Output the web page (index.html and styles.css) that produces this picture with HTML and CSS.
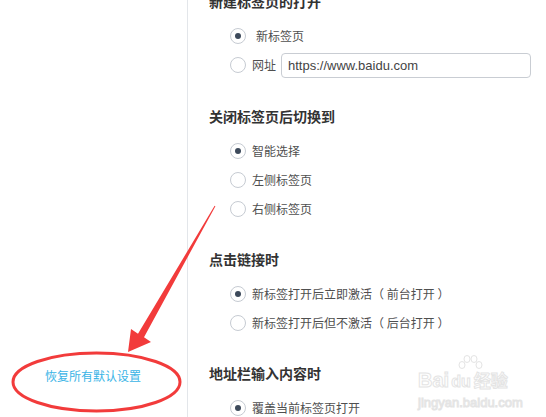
FILE: index.html
```html
<!DOCTYPE html>
<html lang="zh-CN">
<head>
    <meta charset="UTF-8">
    <meta name="viewport" content="width=device-width, initial-scale=1.0">
    <title>设置 - 标签页</title>
    <link rel="stylesheet" href="styles.css">
</head>
<body>

    <div class="page">
        <!-- Sidebar -->
        <aside class="sidebar">
            <a class="reset-link" href="#">恢复所有默认设置</a>
        </aside>

        <!-- Settings -->
        <main class="settings">
            <section class="group">
                <h3 class="group-title">新建标签页的打开</h3>
                <div class="options">
                    <label class="option"><span class="radio checked"></span><span class="label first">新标签页</span></label>
                    <label class="option option-url"><span class="radio"></span><span class="label">网址</span><input class="url-input" type="text" value="https://www.baidu.com"></label>
                </div>
            </section>

            <section class="group">
                <h3 class="group-title">关闭标签页后切换到</h3>
                <div class="options">
                    <label class="option"><span class="radio checked"></span><span class="label">智能选择</span></label>
                    <label class="option"><span class="radio"></span><span class="label">左侧标签页</span></label>
                    <label class="option"><span class="radio"></span><span class="label">右侧标签页</span></label>
                </div>
            </section>

            <section class="group">
                <h3 class="group-title">点击链接时</h3>
                <div class="options">
                    <label class="option"><span class="radio checked"></span><span class="label">新标签打开后立即激活（ 前台打开 ）</span></label>
                    <label class="option"><span class="radio"></span><span class="label">新标签打开后但不激活（ 后台打开 ）</span></label>
                </div>
            </section>

            <section class="group">
                <h3 class="group-title">地址栏输入内容时</h3>
                <div class="options">
                    <label class="option"><span class="radio checked"></span><span class="label">覆盖当前标签页打开</span></label>
                </div>
            </section>
        </main>
    </div>

    <!-- Annotation drawn over the screenshot -->
    <svg class="annotation" width="546" height="417" viewBox="0 0 546 417">
        <ellipse cx="96.5" cy="382" rx="83.5" ry="29" fill="none" stroke="#f23b3b" stroke-width="3"/>
        <polygon fill="#f23b3b" points="214.6,205.8 138,333.8 131,329 128,352 151,342 144,337.2 215.4,206.2"/>
    </svg>

    <!-- Watermark -->
    <div class="watermark">
        <svg class="wm-paw" width="30" height="16" viewBox="0 0 30 16">
            <g fill="#ffffff" stroke="#e4e4e4" stroke-width="1">
                <ellipse cx="6" cy="11" rx="3" ry="3.5"/>
                <ellipse cx="11" cy="5" rx="3" ry="3.5"/>
                <ellipse cx="18" cy="5" rx="3" ry="3.5"/>
                <ellipse cx="23" cy="11" rx="3" ry="3.5"/>
            </g>
        </svg>
        <div class="wm-logo">Bai<span class="wm-du">du</span><span class="wm-cn">经验</span></div>
        <div class="wm-url">jingyan.baidu.com</div>
    </div>

</body>
</html>
```

FILE: styles.css
```css
body {
    margin: 0;
    padding: 0;
    background-color: #ffffff;
    font-family: "Noto Sans CJK SC", "Liberation Sans", sans-serif;
    overflow: hidden;
}

.page {
    display: flex;
    height: 417px;
    overflow: hidden;
}

.sidebar {
    width: 188px;
    flex-shrink: 0;
    border-right: 1px solid #e3e6ea;
    display: flex;
    flex-direction: column;
    justify-content: flex-end;
    padding-bottom: 31px;
    box-sizing: border-box;
}

.reset-link {
    padding-left: 45px;
    font-size: 12px;
    line-height: 20px;
    color: #3ab4e6;
    text-decoration: none;
}

.settings {
    flex: 1;
    padding-left: 21px;
    margin-top: -9px;
}

.group {
    margin-bottom: 26px;
}

.group-title {
    margin: 0 0 10px 0;
    font-size: 14px;
    line-height: 20px;
    font-weight: bold;
    color: #333333;
}

.options {
    padding-left: 21px;
}

.option {
    display: flex;
    align-items: center;
    height: 29px;
}

.option-url {
    height: 30px;
}

.radio {
    width: 14px;
    height: 14px;
    border: 1px solid #c6cbd2;
    border-radius: 50%;
    flex-shrink: 0;
    display: flex;
    align-items: center;
    justify-content: center;
}

.radio.checked::after {
    content: "";
    width: 6px;
    height: 6px;
    border-radius: 50%;
    background-color: #3d4a5b;
}

.label {
    margin-left: 6px;
    font-size: 12px;
    line-height: 20px;
    color: #4f4f4f;
}

.label.first {
    margin-left: 10px;
}

.url-input {
    margin-left: 5px;
    width: 250px;
    height: 25px;
    box-sizing: border-box;
    border: 1px solid #c9cdd3;
    border-radius: 4px;
    padding: 0 6px;
    font-family: "Liberation Sans", sans-serif;
    font-size: 13px;
    color: #444444;
    outline: none;
}

.annotation {
    position: absolute;
    top: 0;
    left: 0;
    pointer-events: none;
}

.watermark {
    position: absolute;
    left: 418px;
    top: 354px;
    color: #ffffff;
    -webkit-text-stroke: 1px #e4e4e4;
    pointer-events: none;
    font-family: "Liberation Sans", sans-serif;
}

.wm-paw {
    display: block;
    margin-left: 38px;
}

.wm-logo {
    font-size: 20px;
    font-weight: bold;
    line-height: 20px;
}

.wm-du {
    font-size: 16px;
    margin-left: 2px;
}

.wm-cn {
    font-family: "Noto Sans CJK SC", sans-serif;
    font-size: 17px;
    margin-left: 3px;
}

.wm-url {
    font-size: 13px;
    line-height: 14px;
    margin-top: 4px;
}
```
